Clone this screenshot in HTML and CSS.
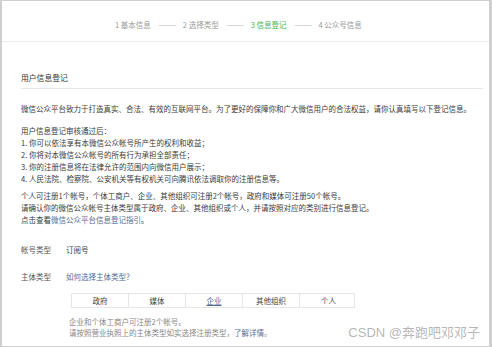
FILE: index.html
```html
<!DOCTYPE html>
<html lang="zh-CN">
<head>
<meta charset="utf-8">
<title>用户信息登记</title>
<link rel="stylesheet" href="styles.css">
</head>
<body>
<div class="frame">
  <header class="steps">
    <span class="step">1 基本信息</span><span class="dash"></span>
    <span class="step">2 选择类型</span><span class="dash"></span>
    <span class="step current">3 信息登记</span><span class="dash"></span>
    <span class="step">4 公众号信息</span>
  </header>
  <main class="content">
    <h2 class="title">用户信息登记</h2>
    <p class="intro">微信公众平台致力于打造真实、合法、有效的互联网平台。为了更好的保障你和广大微信用户的合法权益，请你认真填写以下登记信息。</p>
    <div class="block first">
      <p>用户信息登记审核通过后：</p>
      <p>1. 你可以依法享有本微信公众帐号所产生的权利和收益；</p>
      <p>2. 你将对本微信公众帐号的所有行为承担全部责任；</p>
      <p>3. 你的注册信息将在法律允许的范围内向微信用户展示；</p>
      <p>4. 人民法院、检察院、公安机关等有权机关可向腾讯依法调取你的注册信息等。</p>
    </div>
    <div class="block second">
      <p>个人可注册1个帐号，个体工商户、企业、其他组织可注册2个帐号，政府和媒体可注册50个帐号。</p>
      <p>请确认你的微信公众帐号主体类型属于政府、企业、其他组织或个人，并请按照对应的类别进行信息登记。</p>
      <p>点击查看<a class="link">微信公众平台信息登记指引</a>。</p>
    </div>
    <div class="field account">
      <span class="label">帐号类型</span>
      <span class="value">订阅号</span>
    </div>
    <div class="field subject">
      <span class="label">主体类型</span>
      <a class="link">如何选择主体类型？</a>
    </div>
    <div class="field-body">
      <div class="types">
        <span class="type">政府</span>
        <span class="type">媒体</span>
        <span class="type active">企业</span>
        <span class="type">其他组织</span>
        <span class="type">个人</span>
      </div>
      <div class="tips">
        <p>企业和个体工商户可注册2个帐号。</p>
        <p>请按照营业执照上的主体类型如实选择注册类型，<a class="link">了解详情</a>。</p>
      </div>
    </div>
  </main>
  <div class="watermark">CSDN @奔跑吧邓邓子</div>
</div>
</body>
</html>
```
FILE: styles.css
```css
* { box-sizing: border-box; margin: 0; padding: 0; }
body {
  margin: 0;
  background: #fff;
  font-family: "Noto Sans CJK SC", "Noto Sans", sans-serif;
  font-size: 7.5px;
  color: #3a3a3a;
}
.frame {
  position: relative;
  width: 492px;
  height: 347px;
  border-top: 1px solid #cfcfcf;
  border-left: 2px solid #cfcfcf;
  border-right: 3px solid #cfcfcf;
  border-bottom: 1px solid #cfcfcf;
  overflow: hidden;
}
.steps {
  height: 41px;
  border-bottom: 1px solid #ececec;
  padding: 18px 0 0 113px;
  display: flex;
  align-items: flex-start;
  line-height: 12px;
}
.step { color: #9a9a9a; white-space: nowrap; }
.step.current { color: #44b549; }
.dash {
  display: inline-block;
  width: 17px;
  height: 1px;
  background: #d8d8d8;
  margin: 6px 7px 0 8px;
}
.content {
  padding: 0 6px 0 19px;
  line-height: 12px;
}
.title {
  font-size: 7.8px;
  font-weight: normal;
  color: #333;
  margin-top: 30px;
  padding-bottom: 4px;
  border-bottom: 1px solid #e7e7e7;
  line-height: 12px;
}
.intro { margin-top: 14px; }
.block.first { margin-top: 10px; }
.block.second { margin-top: 5px; }
.link { color: #576b95; text-decoration: none; }
.field { display: flex; }
.field.account { margin-top: 18px; }
.field.subject { margin-top: 15px; }
.label { width: 45px; color: #555; }
.field-body { padding-left: 48px; }
.types {
  margin-top: 10px;
  display: grid;
  grid-template-columns: repeat(5, 57px);
  width: 284px;
  height: 15px;
  border: 1px solid #e6e6e6;
  margin-left: 2px;
}
.type {
  text-align: center;
  line-height: 13px;
  border-right: 1px solid #e6e6e6;
  color: #444;
}
.type:last-child { border-right: none; }
.type.active { color: #576b95; text-decoration: underline; }
.tips {
  margin-top: 8px;
  line-height: 11px;
  color: #888;
}
.watermark {
  position: absolute;
  right: 9px;
  bottom: 5px;
  font-size: 13px;
  line-height: 16px;
  color: rgba(150, 150, 150, 0.7);
  font-family: "Liberation Sans", "Noto Sans CJK SC", sans-serif;
}
```
